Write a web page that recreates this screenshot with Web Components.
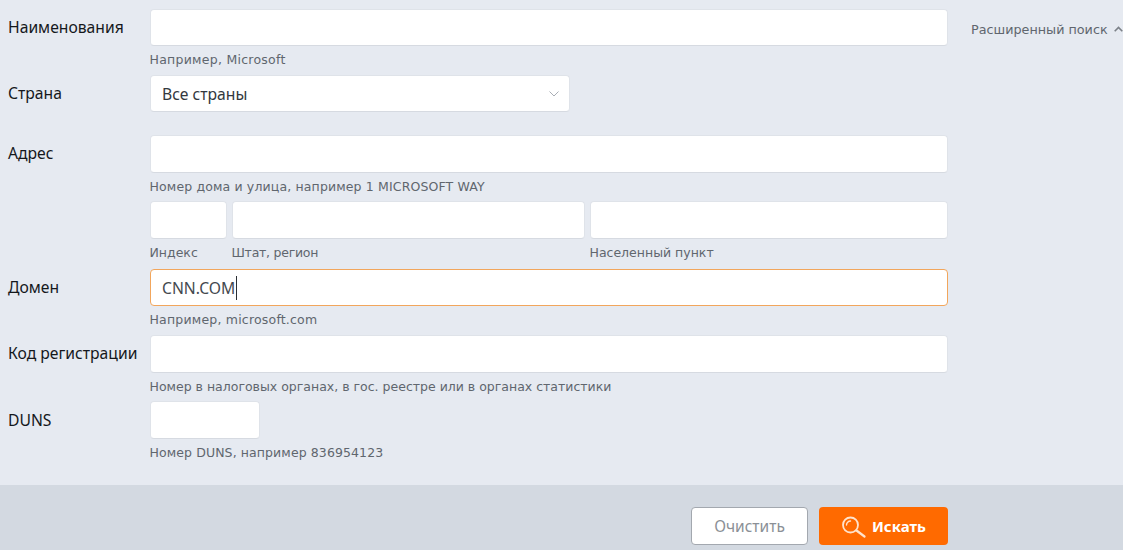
<!DOCTYPE html>
<html lang="ru">
<head>
<meta charset="utf-8">
<title>Поиск</title>
<style>
  html, body { margin: 0; padding: 0; }
  body { background: #e6eaf1; font-family: "Noto Sans", sans-serif; }
  .tall { --box-h: 38px; }
</style>
</head>
<body>
<search-page>
  <form-row label="Наименования" hint="Например, Microsoft" slot="rows" style="--hint-ls: .26px">
    <text-box></text-box>
    <advanced-toggle slot="aside">Расширенный поиск</advanced-toggle>
  </form-row>
  <form-row label="Страна" gap="23" slot="rows" narrow="420">
    <select-box>Все страны</select-box>
  </form-row>
  <form-row class="tall" label="Адрес" gap="28" hint="Номер дома и улица, например 1 MICROSOFT WAY" slot="rows" style="--hint-ls: .14px">
    <text-box></text-box>
  </form-row>
  <form-row class="tall" slot="rows" gap="0">
    <address-parts>
      <text-box hint="Индекс"></text-box>
      <text-box hint="Штат, регион" style="--hint-ls: -.25px"></text-box>
      <text-box hint="Населенный пункт"></text-box>
    </address-parts>
  </form-row>
  <form-row label="Домен" hint="Например, microsoft.com" slot="rows" style="--hint-ls: .2px">
    <text-box value="CNN.COM" focused></text-box>
  </form-row>
  <form-row class="tall" label="Код регистрации" gap="28" hint="Номер в налоговых органах, в гос. реестре или в органах статистики" slot="rows">
    <text-box></text-box>
  </form-row>
  <form-row class="tall" label="DUNS" gap="28" hint="Номер DUNS, например 836954123" slot="rows" narrow="110" style="--label-h: 38px; --hint-ls: .1px">
    <text-box></text-box>
  </form-row>
  <action-bar slot="footer"></action-bar>
</search-page>

<script>
class SearchPage extends HTMLElement {
    constructor() {
        super();
        this.attachShadow({ mode: 'open' });
        this.shadowRoot.innerHTML = `
      <style>
        :host { display: flex; flex-direction: column; height: 550px; overflow: hidden; }
        .rows { flex: 1; padding-top: 9px; box-sizing: border-box; }
      </style>
      <div class="rows"><slot name="rows"></slot></div>
      <slot name="footer"></slot>
    `;
    }
}

// one label + control + hint line of the form
class FormRow extends HTMLElement {
    constructor() {
        super();
        this.attachShadow({ mode: 'open' });
        const label = this.getAttribute('label') || '';
        const hint = this.getAttribute('hint') || '';
        const gap = this.getAttribute('gap') || 29;
        const narrow = this.getAttribute('narrow');
        this.shadowRoot.innerHTML = `
      <style>
        :host { display: grid; grid-template-columns: 150px 798px 1fr; }
        .label {
          padding-left: 8px;
          height: 37px;
          line-height: var(--label-h, 36px);
          font-size: 15.7px;
          color: #15181c;
          white-space: nowrap;
        }
        .control { width: ${narrow ? narrow + 'px' : '100%'}; }
        .hint {
          height: ${gap}px;
          padding-top: ${gap > 0 ? 6 : 0}px;
          margin-left: -0.5px;
          box-sizing: border-box;
          font-family: "DejaVu Sans", sans-serif;
          font-size: 12.5px;
          line-height: 16px;
          letter-spacing: var(--hint-ls, 0);
          color: #60666e;
          white-space: nowrap;
        }
        .aside { padding: 1px 0 0 23px; white-space: nowrap; }
      </style>
      <div class="label">${label}</div>
      <div>
        <div class="control"><slot></slot></div>
        <div class="hint">${hint}</div>
      </div>
      <div class="aside"><slot name="aside"></slot></div>
    `;
    }
}

class TextBox extends HTMLElement {
    constructor() {
        super();
        this.attachShadow({ mode: 'open' });
        const value = this.getAttribute('value') || '';
        const hint = this.getAttribute('hint');
        const focused = this.hasAttribute('focused');
        this.shadowRoot.innerHTML = `
      <style>
        :host { display: block; }
        .box {
          height: var(--box-h, 37px);
          box-sizing: border-box;
          background: #fff;
          border: 1px solid ${focused ? '#f2a65c' : '#dfe3e9'};
          border-bottom-color: ${focused ? '#f2a65c' : '#d6dae1'};
          border-radius: 4px;
          padding: 0 11px;
          display: flex;
          align-items: center;
          font-size: 15.7px;
          color: #44494f;
        }
        .caret { width: 1px; height: 24px; background: #2b2f34; margin-left: 1px; }
        .hint {
          padding-top: 6px;
          margin-left: -0.5px;
          font-family: "DejaVu Sans", sans-serif;
          font-size: 12.5px;
          line-height: 16px;
          letter-spacing: var(--hint-ls, 0);
          color: #60666e;
          white-space: nowrap;
        }
      </style>
      <div class="box">${value}${focused ? '<span class="caret"></span>' : ''}</div>
      ${hint ? `<div class="hint">${hint}</div>` : ''}
    `;
    }
}

class SelectBox extends HTMLElement {
    constructor() {
        super();
        this.attachShadow({ mode: 'open' });
        this.shadowRoot.innerHTML = `
      <style>
        :host { display: block; }
        .box {
          height: 37px;
          box-sizing: border-box;
          background: #fff;
          border: 1px solid #dfe3e9;
          border-bottom-color: #d6dae1;
          border-radius: 4px;
          padding: 0 10px 0 11px;
          display: flex;
          align-items: center;
          justify-content: space-between;
          font-size: 15.7px;
          color: #33383e;
        }
        svg { display: block; }
      </style>
      <div class="box">
        <span><slot></slot></span>
        <svg width="10" height="6" viewBox="0 0 10 6" fill="none" stroke="#a9aeb5" stroke-width="1"><path d="M.5.5 5 5 9.500.5"/></svg>
      </div>
    `;
    }
}

class AddressParts extends HTMLElement {
    constructor() {
        super();
        this.attachShadow({ mode: 'open' });
        this.shadowRoot.innerHTML = `
      <style>
        :host { display: grid; grid-template-columns: 77px 353px 358px; column-gap: 5px; height: 68px; }
      </style>
      <slot></slot>
    `;
    }
}

class AdvancedToggle extends HTMLElement {
    constructor() {
        super();
        this.attachShadow({ mode: 'open' });
        this.shadowRoot.innerHTML = `
      <style>
        :host {
          display: flex;
          align-items: center;
          gap: 6px;
          height: 38px;
          font-family: "DejaVu Sans", sans-serif;
          font-size: 12.75px;
          color: #60666e;
        }
        svg { display: block; }
      </style>
      <slot></slot>
      <svg width="9" height="6" viewBox="0 0 9 6" fill="none" stroke="#7c8188" stroke-width="1.600"><path d="M.7 5.200 4.500 1.400l3.800 3.800"/></svg>
    `;
    }
}

class ActionBar extends HTMLElement {
    constructor() {
        super();
        this.attachShadow({ mode: 'open' });
        this.shadowRoot.innerHTML = `
      <style>
        :host {
          display: flex;
          justify-content: flex-end;
          gap: 11px;
          height: 65px;
          box-sizing: border-box;
          padding: 22px 175px 0 0;
          background: #d3d9e1;
        }
        button {
          height: 38px;
          box-sizing: border-box;
          border-radius: 4px;
          font-family: "Noto Sans", sans-serif;
          font-size: 15.5px;
          display: flex;
          align-items: center;
          padding: 0;
        }
        .clear { width: 117px; background: #fff; border: 1px solid #a3a8af; color: #8b9096; justify-content: center; }
        .search { width: 129px; background: #ff6a00; border: 0; color: #fff; font-weight: 700; font-size: 15px; gap: 6px; padding-left: 23px; }
        svg { display: block; }
      </style>
      <button class="clear">Очистить</button>
      <button class="search">
        <svg width="24" height="24" viewBox="0 0 24 24" fill="none" stroke="#ffe3cc" stroke-linecap="round">
          <circle cx="8.500" cy="11" r="7.500" stroke-width="1.800"/>
          <path d="M4.500 11A4 4 0 0 1 8.500 7" stroke-width="1.400"/>
          <path d="m14.500 16.500 8 6" stroke-width="2.200"/>
        </svg>
        Искать
      </button>
    `;
    }
}

customElements.define('search-page', SearchPage);
customElements.define('form-row', FormRow);
customElements.define('text-box', TextBox);
customElements.define('select-box', SelectBox);
customElements.define('address-parts', AddressParts);
customElements.define('advanced-toggle', AdvancedToggle);
customElements.define('action-bar', ActionBar);
</script>
</body>
</html>
